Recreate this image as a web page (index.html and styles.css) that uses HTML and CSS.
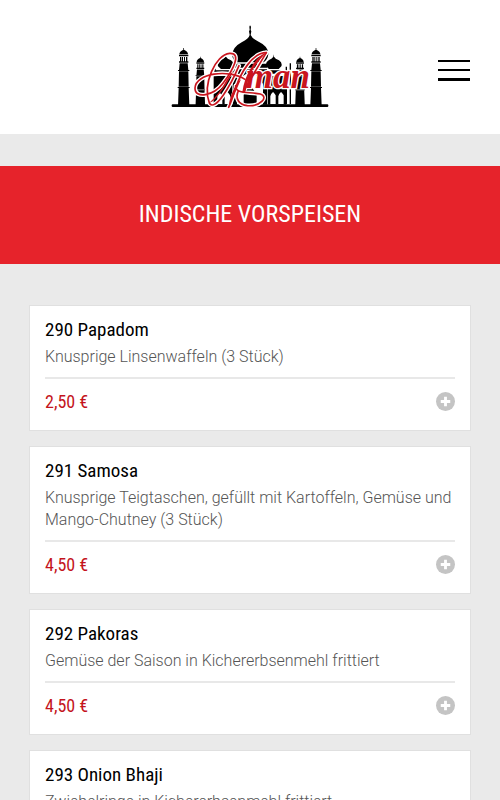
FILE: index.html
```html
<!DOCTYPE html>
<html lang="de">
<head>
<meta charset="UTF-8">
<meta name="viewport" content="width=device-width, initial-scale=1">
<title>Aman - Indische Vorspeisen</title>
<link rel="stylesheet" href="styles.css">
</head>
<body>
  <svg class="sprite" aria-hidden="true">
    <symbol id="icon-plus" viewBox="0 0 20 20">
      <circle cx="10" cy="10" r="10" fill="currentColor"/>
      <path d="M10 5v10M5 10h10" stroke="#fff" stroke-width="3"/>
    </symbol>
  </svg>

  <header class="header">
    <a class="logo" href="#" aria-label="Aman">
      <svg viewBox="0 0 510 285">
        <defs>
          <!-- minaret -->
          <g id="tower">
            <path d="M-1 0h2v5q12 5 12 14h-26q0-9 12-14z"/>
            <path d="M-14 20h28v5h-28zM-11 27h4v13h-4zM-5 27h3v13h-3zM1 27h3v13h-3zM7 27h4v13h-4zM-14 40h28v4h-28z"/>
            <path d="M-12 46h24l2 20h-28zM-14 70h28l1 46h-30zM-15 120h30l2 53h-34z"/>
            <path d="M-17 66h34v3h-34zM-18 117h36v3h-36z"/>
          </g>
          <!-- swashes around the first letter -->
          <g id="swashes">
            <path d="M304 98C262 98 226 160 212 205 204 230 198 248 191 262"/>
            <path d="M304 98C284 132 254 180 236 214"/>
            <path d="M240 178C190 146 92 160 90 204 89 238 146 228 174 190 203 152 232 98 194 100 151 104 112 193 133 249 149 278 197 197 222 137"/>
            <path d="M212 197C210 222 249 215 286 222 312 230 287 260 247 257 220 254 211 235 219 215"/>
          </g>
        </defs>
        <rect x="20" y="253" width="470" height="8" rx="3"/>
        <use href="#tower" x="56" y="84"/>
        <use href="#tower" x="453" y="84"/>
        <use href="#tower" transform="translate(106 110) scale(.84)"/>
        <use href="#tower" transform="translate(405 110) scale(.84)"/>
        <!-- domes and main building -->
        <path d="M255 16l3 4-1 10 2 4-2 11q5 12 24 20 30 14 29 38-2 16-14 24h-82q-13-9-12-24 2-22 28-36 21-10 24-22l-2-11 2-4-1-10z"/>
        <path d="M183 103v7q3 6 15 11 11 7 7 18l-8 8h-29l-9-8q-3-12 9-19 10-4 13-10zM327 103v7q3 6 15 11 11 7 7 18l-8 8h-29l-9-8q-3-12 9-19 10-4 13-10z"/>
        <path d="M204 131h102v12H204zM150 151h54v10h-54zM306 151h54v10h-54zM204 148h102v106h-12v-62q-15-28-39-36-26 9-39 36v62h-12z"/>
        <path fill-rule="evenodd" d="M146 168h56v86h-56zM157 252h15v-24q-7-10-8-10-7 6-7 12zM179 252h16v-26q-7-10-8-10-8 7-8 13zM308 168h56v86h-56zM316 252h16v-26q-7-10-8-10-8 7-8 13zM340 252h16v-26q-7-10-8-10-8 7-8 13z"/>
        <path d="M150 146v105M364 140v112M376 130v122" stroke="#000" stroke-width="4" fill="none"/>
        <path d="M236 252v-27q7-18 19-26 13 9 20 26v27z"/>
        <!-- lettering -->
        <use class="swash-edge" href="#swashes"/>
        <text class="logo-text" x="242" y="204">man</text>
        <use class="swash" href="#swashes"/>
        <path class="swash-fill" d="M306 97q-30 10-50 50-20 34-24 70 4 4 10-4 6-36 22-65 22-34 42-51zM190 264q4-40 28-78l10-8q-18 42-38 86zM205 152q-20 46-52 82-12 14-20 14 30-26 48-62 10-20 24-34z"/>
      </svg>
    </a>
    <button class="menu-toggle" type="button" aria-label="Menü">
      <span></span>
      <span></span>
      <span></span>
    </button>
  </header>

  <main>
    <h1 class="banner">INDISCHE VORSPEISEN</h1>

    <div class="menu-list">
      <article class="dish">
        <h2>290 Papadom</h2>
        <p class="description">Knusprige Linsenwaffeln (3 Stück)</p>
        <div class="dish-footer">
          <span class="price">2,50 €</span>
          <button class="add" type="button" aria-label="290 Papadom hinzufügen"><svg><use href="#icon-plus"/></svg></button>
        </div>
      </article>

      <article class="dish">
        <h2>291 Samosa</h2>
        <p class="description">Knusprige Teigtaschen, gefüllt mit Kartoffeln, Gemüse und Mango-Chutney (3 Stück)</p>
        <div class="dish-footer">
          <span class="price">4,50 €</span>
          <button class="add" type="button" aria-label="291 Samosa hinzufügen"><svg><use href="#icon-plus"/></svg></button>
        </div>
      </article>

      <article class="dish">
        <h2>292 Pakoras</h2>
        <p class="description">Gemüse der Saison in Kichererbsenmehl frittiert</p>
        <div class="dish-footer">
          <span class="price">4,50 €</span>
          <button class="add" type="button" aria-label="292 Pakoras hinzufügen"><svg><use href="#icon-plus"/></svg></button>
        </div>
      </article>

      <article class="dish">
        <h2>293 Onion Bhaji</h2>
        <p class="description">Zwiebelringe in Kichererbsenmehl frittiert</p>
      </article>
    </div>
  </main>
</body>
</html>
```
FILE: styles.css
```css
*, *::before, *::after {
  box-sizing: border-box;
}
body {
  margin: 0;
  background: #eaeaea;
  color: #000;
  font-family: Roboto, sans-serif;
  font-size: 16px;
  line-height: 22px;
}
button {
  padding: 0;
  border: none;
  background: none;
  cursor: pointer;
}
.sprite {
  display: none;
}

/* Header */
.header {
  display: grid;
  grid-template-columns: 1fr auto 1fr;
  align-items: center;
  padding: 20px 30px 19px;
  background: #fff;
}
.logo {
  grid-column: 2;
}
.logo svg {
  display: block;
  width: 170px;
  height: 95px;
}
.swash, .swash-edge {
  fill: none;
  stroke: #c9151e;
  stroke-width: 5;
  stroke-linecap: round;
}
.swash-edge {
  stroke: #fff;
  stroke-width: 13;
}
.swash-fill {
  fill: #c9151e;
}
.logo-text {
  font-family: "Liberation Serif", serif;
  font-size: 105px;
  font-style: italic;
  font-weight: 700;
  fill: #c9151e;
  stroke: #fff;
  stroke-width: 8;
  paint-order: stroke;
}
.menu-toggle {
  display: flex;
  flex-direction: column;
  justify-self: end;
  gap: 7px;
  width: 32px;
  padding-top: 6px;
}
.menu-toggle span {
  height: 2px;
  background: #000;
}
.menu-toggle span:last-child {
  height: 3px;
}

/* Page title */
.banner {
  margin: 32px 0 0;
  padding: 33px 20px 35px;
  background: #e6232b;
  color: #fff;
  font-family: "Roboto Condensed", Roboto, sans-serif;
  font-size: 24px;
  font-weight: 400;
  line-height: 30px;
  text-align: center;
}

/* Dishes */
.menu-list {
  display: flex;
  flex-direction: column;
  gap: 15px;
  padding: 41px 29px;
}
.dish {
  padding: 11px 15px 6px;
  border: 1px solid #e0e0e0;
  background: #fff;
}
.dish h2 {
  margin: 0 0 3px;
  font-family: "Roboto Condensed", Roboto, sans-serif;
  font-size: 19px;
  font-weight: 400;
  line-height: 26px;
}
.description {
  margin: 0 0 9px;
  color: #555;
  font-weight: 300;
}
.dish-footer {
  display: flex;
  align-items: center;
  justify-content: space-between;
  height: 47px;
  border-top: 2px solid #e8e8e8;
}
.price {
  color: #c4141c;
  font-family: "Roboto Condensed", Roboto, sans-serif;
  font-size: 18px;
}
.add {
  color: #c4c4c4;
}
.add svg {
  display: block;
  width: 19px;
  height: 19px;
}
```
